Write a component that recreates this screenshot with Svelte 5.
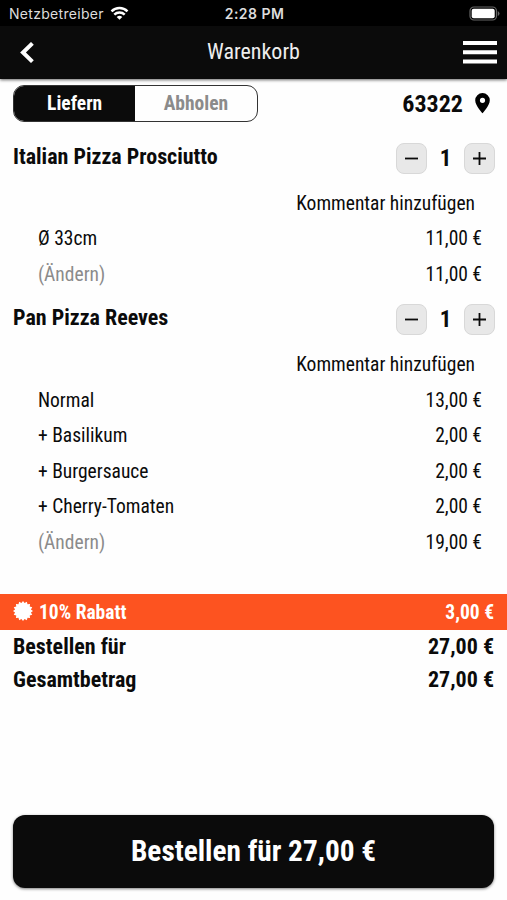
<script>
	let mode = $state('Liefern');

	let items = $state([
		{
			name: 'Italian Pizza Prosciutto',
			count: 1,
			total: 11,
			options: [{ label: 'Ø 33cm', price: 11 }]
		},
		{
			name: 'Pan Pizza Reeves',
			count: 1,
			total: 19,
			options: [
				{ label: 'Normal', price: 13 },
				{ label: '+ Basilikum', price: 2 },
				{ label: '+ Burgersauce', price: 2 },
				{ label: '+ Cherry-Tomaten', price: 2 }
			]
		}
	]);

	const discount = 3;

	let total = $derived(items.reduce((sum, item) => sum + item.total * item.count, 0) - discount);

	function euro(value) {
		return value.toFixed(2).replace('.', ',') + ' €';
	}

	// outline of the discount badge: a star with short teeth
	const badge = Array.from({ length: 32 }, (_, i) => {
		const r = i % 2 ? 8.1 : 10;
		const a = (i * Math.PI) / 16;
		return `${(10 + r * Math.sin(a)).toFixed(2)},${(10 - r * Math.cos(a)).toFixed(2)}`;
	}).join(' ');
</script>

<div class="screen">
	<div class="status">
		<div class="carrier">
			<span>Netzbetreiber</span>
			<svg width="19" height="14" viewBox="0 0 18 14" fill="none" stroke="#fff" stroke-width="2.5">
				<path d="M1 5.3a11.5 11.5 0 0 1 16 0" />
				<path d="M3.8 8.6a7.5 7.5 0 0 1 10.4 0" />
				<path d="M9 13.8 6.2 11a4 4 0 0 1 5.6 0z" fill="#fff" stroke="none" />
			</svg>
		</div>
		<span class="time">2:28 PM</span>
		<svg class="battery" width="31" height="15" viewBox="0 0 31 15">
			<rect x="1" y="1" width="26.5" height="13" rx="4" fill="none" stroke="#666" stroke-width="1.2" />
			<rect x="2.7" y="2.8" width="23" height="9.4" rx="2" fill="#fff" />
			<path d="M28.8 5v5q1.7-1 1.7-2.5T28.8 5z" fill="#666" />
		</svg>
	</div>

	<header>
		<button class="plain" aria-label="Zurück">
			<svg width="14" height="22" viewBox="0 0 14 22" fill="none" stroke="#fff" stroke-width="4">
				<path d="M12.4 1.4 3 10.5l9.4 9.1" />
			</svg>
		</button>
		<h1>Warenkorb</h1>
		<button class="plain" aria-label="Menü">
			<svg width="34" height="24" viewBox="0 0 34 24" fill="#fff">
				<path d="M0 0h34v4H0zM0 9.3h34v4H0zM0 18.5h34v4H0z" />
			</svg>
		</button>
	</header>

	<div class="delivery">
		<div class="toggle">
			{#each ['Liefern', 'Abholen'] as option}
				<button class:active={mode === option} onclick={() => (mode = option)}>{option}</button>
			{/each}
		</div>
		<div class="zip">
			<span>63322</span>
			<svg width="15" height="21" viewBox="0 0 15 21">
				<path
					d="M7.5 0A7.3 7.3 0 0 0 .2 7.3C.2 12.8 7.5 20.3 7.5 20.3s7.3-7.5 7.3-13A7.3 7.3 0 0 0 7.5 0zm0 9.9a2.6 2.6 0 1 1 0-5.2 2.6 2.6 0 0 1 0 5.2z"
				/>
			</svg>
		</div>
	</div>

	{#each items as item}
		<section>
			<div class="item-head">
				<h2>{item.name}</h2>
				<div class="stepper">
					<button aria-label="Weniger" onclick={() => item.count > 1 && item.count--}>
						<svg width="13" height="13" viewBox="0 0 13 13"><path d="M0 6.5h13" /></svg>
					</button>
					<span>{item.count}</span>
					<button aria-label="Mehr" onclick={() => item.count++}>
						<svg width="13" height="13" viewBox="0 0 13 13"><path d="M0 6.5h13M6.5 0v13" /></svg>
					</button>
				</div>
			</div>
			<div class="row comment"><span>Kommentar hinzufügen</span></div>
			{#each item.options as option}
				<div class="row">
					<span>{option.label}</span>
					<span>{euro(option.price)}</span>
				</div>
			{/each}
			<div class="row">
				<span class="change">(Ändern)</span>
				<span>{euro(item.total * item.count)}</span>
			</div>
		</section>
	{/each}

	<div class="discount">
		<svg width="20" height="20" viewBox="0 0 20 20" fill="#fff"><polygon points={badge} /></svg>
		<span>10% Rabatt</span>
		<span class="amount">{euro(discount)}</span>
	</div>

	<div class="sum"><span>Bestellen für</span><span>{euro(total)}</span></div>
	<div class="sum"><span>Gesamtbetrag</span><span>{euro(total)}</span></div>

	<button class="order">Bestellen für {euro(total)}</button>
</div>

<style>
	:global(body) {
		background: #fefefe;
	}

	.screen {
		display: flex;
		flex-direction: column;
		width: 507px;
		height: 900px;
		overflow: hidden;
		box-sizing: border-box;
		padding-bottom: 12px;
		color: #0b0b0b;
		font-family: 'Roboto Condensed', Roboto, sans-serif;
		font-stretch: 75%;
		font-size: 19.5px;
		white-space: nowrap;
	}

	button {
		font: inherit;
		color: inherit;
		padding: 0;
		cursor: pointer;
	}

	svg {
		display: block;
	}

	.status {
		display: grid;
		grid-template-columns: 1fr auto 1fr;
		align-items: center;
		height: 26px;
		padding: 0 7px 0 9px;
		background: #000;
		color: #ddd;
		font-family: Inter, sans-serif;
		font-stretch: normal;
		font-size: 14px;
	}

	.carrier {
		display: flex;
		align-items: center;
		gap: 6px;
		letter-spacing: 0.3px;
	}

	.time {
		font-weight: 600;
		letter-spacing: 0.45px;
	}

	.battery {
		justify-self: end;
	}

	header {
		display: grid;
		grid-template-columns: 1fr auto 1fr;
		align-items: center;
		height: 53px;
		padding: 0 10px;
		background: #0b0b0b;
		color: #eee;
		box-shadow: 0 1px 3px rgba(0, 0, 0, 0.6);
	}

	.plain {
		justify-self: start;
		margin-left: 10px;
		border: none;
		background: none;
	}

	h1 + .plain {
		justify-self: end;
	}

	h1 {
		margin: 0 0 2px;
		font-size: 22px;
		font-weight: 400;
	}

	.delivery {
		display: flex;
		align-items: center;
		justify-content: space-between;
		height: 37px;
		padding: 6px 17px 8.5px 13px;
	}

	.toggle {
		display: grid;
		grid-template-columns: 1fr 1fr;
		box-sizing: border-box;
		width: 244.5px;
		height: 37px;
		border: 1px solid #333;
		border-radius: 11px;
		overflow: hidden;
	}

	.toggle button {
		padding-bottom: 1px;
		border: none;
		background: none;
		color: #8b8b8b;
		font-weight: 700;
	}

	.toggle button.active {
		background: #0b0b0b;
		color: #fff;
	}

	.zip {
		display: flex;
		align-items: center;
		gap: 12px;
		font-size: 24px;
		font-weight: 700;
	}

	.zip svg {
		margin-bottom: 1px;
	}

	.item-head {
		display: flex;
		align-items: center;
		justify-content: space-between;
		height: 55px;
		padding: 0 12px 0 13px;
	}

	h2 {
		margin: 0 0 4px;
		font-size: 22px;
		font-weight: 700;
	}

	.stepper {
		display: grid;
		grid-template-columns: 31px 37px 31px;
		align-items: center;
		text-align: center;
		font-size: 23px;
		font-weight: 700;
	}

	.stepper button {
		display: grid;
		place-items: center;
		height: 31px;
		border: 1px solid #d8d8d8;
		border-radius: 8px;
		background: #e8e8e8;
	}

	.stepper svg {
		stroke: #0b0b0b;
		stroke-width: 1.8;
	}

	.row {
		display: flex;
		align-items: center;
		justify-content: space-between;
		height: 35.5px;
		padding: 0 25px 0 38px;
	}

	.comment {
		justify-content: flex-end;
		padding-right: 32px;
	}

	.change {
		color: #8b8b8b;
	}

	.discount {
		display: flex;
		align-items: center;
		height: 36px;
		margin-top: 34px;
		padding: 0 13px;
		background: #fd5320;
		color: #fff;
		font-weight: 700;
	}

	.discount svg {
		margin: 0 6px 2px 0;
	}

	.amount {
		margin-left: auto;
	}

	.sum {
		display: flex;
		align-items: center;
		justify-content: space-between;
		height: 33px;
		padding: 0 13px;
		font-size: 22px;
		font-weight: 700;
	}

	.order {
		height: 73px;
		margin: auto 13px 0;
		padding-bottom: 2px;
		border: none;
		border-radius: 12px;
		background: #0b0b0b;
		color: #fff;
		font-size: 29.3px;
		font-weight: 700;
		box-shadow: 0 1px 3px rgba(0, 0, 0, 0.5);
	}
</style>
